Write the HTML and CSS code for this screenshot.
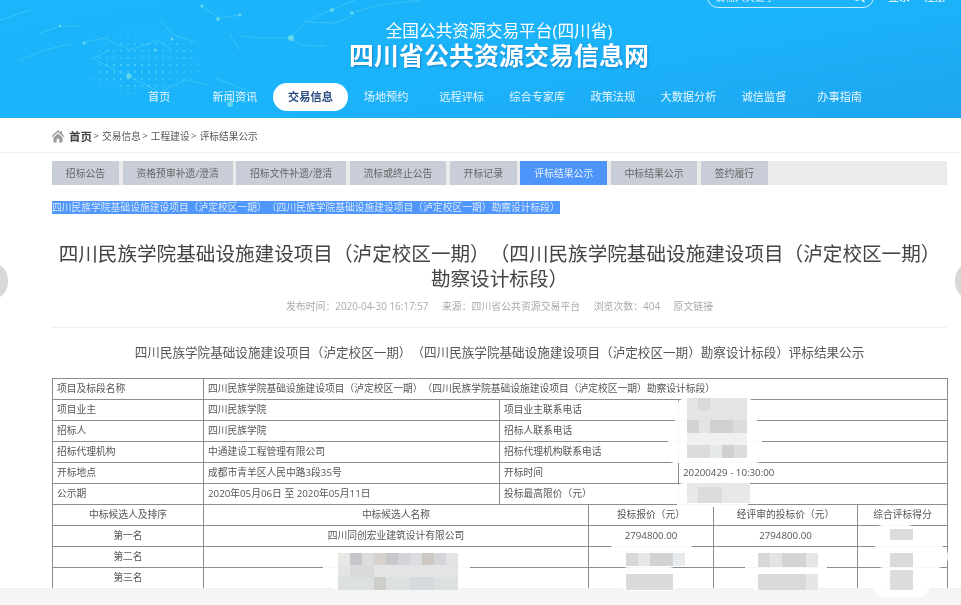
FILE: index.html
```html
<!DOCTYPE html>
<html lang="zh-CN">
<head>
  <meta charset="UTF-8">
  <title>评标结果公示 - 四川省公共资源交易信息网</title>
  <link rel="stylesheet" href="styles.css">
</head>
<body>
  <div class="page">
    <header class="header">
      <svg class="header-bg" width="961" height="118" viewBox="0 0 961 118">
        <defs>
          <pattern id="dots" width="7" height="7" patternUnits="userSpaceOnUse">
            <circle cx="2" cy="2" r="0.8" fill="#7fe6e6" opacity="0.45"/>
          </pattern>
        </defs>
        <ellipse cx="145" cy="50" rx="55" ry="22" fill="url(#dots)" opacity="0.6"/>
        <ellipse cx="150" cy="65" rx="55" ry="26" fill="url(#dots)"/>
        <ellipse cx="130" cy="78" rx="38" ry="16" fill="url(#dots)"/>
        <g stroke="#7fe6e6" stroke-width="0.6" opacity="0.5" fill="none">
          <path d="M40 33 L60 26 L80 26 M85 42 L105 38 L130 50 L158 40 L172 50 M200 5 L220 18 L240 15 M240 36 L262 38 L290 38 L305 22 L330 10 L355 0"/>
          <path d="M305 22 L335 23 L352 16 M290 38 L300 45 L325 46 M90 60 L110 50 M95 60 L128 76 L160 92 L185 80 L210 85 M215 78 L245 90 M160 20 L172 34 L195 42 M230 35 L240 50"/>
          <path d="M0 20 L30 10 M20 60 L45 50 L70 44 M355 12 L380 5 M380 5 L420 0"/>
        </g>
        <g fill="#7fe6e6" opacity="0.7">
          <circle cx="291" cy="38" r="3"/><circle cx="218" cy="19" r="2"/><circle cx="240" cy="15" r="1.5"/>
          <circle cx="332" cy="10" r="2"/><circle cx="352" cy="13" r="1.8"/><circle cx="129" cy="76" r="2.5"/>
          <circle cx="84" cy="43" r="1.5"/><circle cx="172" cy="39" r="1.5"/><circle cx="230" cy="104" r="3"/>
          <circle cx="155" cy="50" r="1.3"/><circle cx="60" cy="26" r="1.2"/><circle cx="202" cy="6" r="1.5"/>
        </g>
      </svg>
      <div class="topbar">
        <div class="search">
          <span class="search-text">请输入关键字</span>
          <svg class="search-icon" width="16" height="16" viewBox="0 0 16 16" fill="none" stroke="#fff" stroke-width="1.3">
            <circle cx="7" cy="7" r="5"/><path d="M11 11l3.5 3"/>
          </svg>
        </div>
        <a class="top-link">登录</a>
        <a class="top-link">注册</a>
      </div>
      <div class="brand">
        <div class="brand-sub">全国公共资源交易平台(四川省)</div>
        <div class="brand-main">四川省公共资源交易信息网</div>
      </div>
      <nav class="nav">
        <a class="nav-item">首页</a>
        <a class="nav-item">新闻资讯</a>
        <a class="nav-item active">交易信息</a>
        <a class="nav-item">场地预约</a>
        <a class="nav-item">远程评标</a>
        <a class="nav-item">综合专家库</a>
        <a class="nav-item">政策法规</a>
        <a class="nav-item">大数据分析</a>
        <a class="nav-item">诚信监督</a>
        <a class="nav-item">办事指南</a>
      </nav>
    </header>

    <div class="crumbs">
      <svg class="home-icon" width="14" height="14" viewBox="0 0 14 14" fill="#9a9a9a">
        <path d="M7 1L0.5 7.2 1.5 7.9 7 3 12.5 7.9 13.5 7.2 11 4.8V2H9.5V3.4z"/>
        <path d="M2.5 8.4L7 4.4l4.5 4V13.5H8.3V9.8H5.7v3.7H2.500z"/>
      </svg>
      <a class="crumb-home">首页</a><span class="crumb-sep">&gt;</span>
      <a>交易信息</a><span class="crumb-sep">&gt;</span>
      <a>工程建设</a><span class="crumb-sep">&gt;</span>
      <a>评标结果公示</a>
    </div>

    <main class="main">
      <div class="tabs">
        <a class="tab">招标公告</a>
        <a class="tab">资格预审补遗/澄清</a>
        <a class="tab">招标文件补遗/澄清</a>
        <a class="tab">流标或终止公告</a>
        <a class="tab">开标记录</a>
        <a class="tab current">评标结果公示</a>
        <a class="tab">中标结果公示</a>
        <a class="tab">签约履行</a>
      </div>

      <div class="selected-line"><span>四川民族学院基础设施建设项目（泸定校区一期）（四川民族学院基础设施建设项目（泸定校区一期）勘察设计标段）</span></div>

      <h1 class="title">四川民族学院基础设施建设项目（泸定校区一期）（四川民族学院基础设施建设项目（泸定校区一期）勘察设计标段）</h1>

      <div class="meta">
        <span>发布时间：2020-04-30 16:17:57</span>
        <span>来源：四川省公共资源交易平台</span>
        <span>浏览次数：404</span>
        <span>原文链接</span>
      </div>

      <h2 class="subtitle">四川民族学院基础设施建设项目（泸定校区一期）（四川民族学院基础设施建设项目（泸定校区一期）勘察设计标段）评标结果公示</h2>

      <table class="result">
        <colgroup>
          <col class="c1"><col class="c2"><col class="c3"><col class="c4"><col class="c5"><col class="c6"><col class="c7">
        </colgroup>
        <tr>
          <td>项目及标段名称</td>
          <td colspan="6">四川民族学院基础设施建设项目（泸定校区一期）（四川民族学院基础设施建设项目（泸定校区一期）勘察设计标段）</td>
        </tr>
        <tr>
          <td>项目业主</td>
          <td>四川民族学院</td>
          <td colspan="2">项目业主联系电话</td>
          <td colspan="3"></td>
        </tr>
        <tr>
          <td>招标人</td>
          <td>四川民族学院</td>
          <td colspan="2">招标人联系电话</td>
          <td colspan="3"></td>
        </tr>
        <tr>
          <td>招标代理机构</td>
          <td>中通建设工程管理有限公司</td>
          <td colspan="2">招标代理机构联系电话</td>
          <td colspan="3"></td>
        </tr>
        <tr>
          <td>开标地点</td>
          <td>成都市青羊区人民中路3段35号</td>
          <td colspan="2">开标时间</td>
          <td colspan="3">20200429 - 10:30:00</td>
        </tr>
        <tr>
          <td>公示期</td>
          <td>2020年05月06日 至 2020年05月11日</td>
          <td colspan="2">投标最高限价（元）</td>
          <td colspan="3"></td>
        </tr>
        <tr class="center">
          <td>中标候选人及排序</td>
          <td colspan="2">中标候选人名称</td>
          <td colspan="2">投标报价（元）</td>
          <td>经评审的投标价（元）</td>
          <td>综合评标得分</td>
        </tr>
        <tr class="center">
          <td>第一名</td>
          <td colspan="2">四川同创宏业建筑设计有限公司</td>
          <td colspan="2">2794800.00</td>
          <td>2794800.00</td>
          <td></td>
        </tr>
        <tr class="center">
          <td>第二名</td>
          <td colspan="2"></td>
          <td colspan="2"></td>
          <td></td>
          <td></td>
        </tr>
        <tr class="center">
          <td>第三名</td>
          <td colspan="2"></td>
          <td colspan="2"></td>
          <td></td>
          <td></td>
        </tr>
      </table>
    </main>

    <footer class="foot"></footer>

    <!-- mosaics over the hidden cells, they run over the footer edge too -->
    <svg class="mosaics" width="909" height="228" viewBox="0 0 909 228">
      <g fill="#fff" opacity="0.94">
        <rect x="623" y="21" width="82" height="36" rx="12"/>
        <rect x="616" y="50" width="94" height="36" rx="6"/>
        <rect x="621" y="106" width="79" height="24" rx="11"/>
        <rect x="271" y="170" width="147" height="43" rx="16"/>
        <rect x="556" y="166" width="87" height="24" rx="12"/>
        <rect x="566" y="190" width="62" height="24" rx="11"/>
        <rect x="693" y="171" width="82" height="42" rx="14"/>
        <rect x="820" y="148" width="46" height="25" rx="11"/>
        <rect x="823" y="168" width="73" height="23" rx="11"/>
        <rect x="820" y="190" width="58" height="30" rx="12"/>
      </g>
      <rect x="635" y="21" width="60" height="22" fill="#e3e4e5"/>
      <rect x="646" y="21" width="12" height="12" fill="#d8d9da"/>
      <rect x="635" y="43" width="12" height="13" fill="#d3d3d3"/>
      <rect x="647" y="43" width="11" height="13" fill="#e4e4e4"/>
      <rect x="658" y="43" width="23" height="13" fill="#d0d0d0"/>
      <rect x="681" y="43" width="14" height="13" fill="#dcdcdc"/>
      <rect x="635" y="56" width="60" height="12" fill="#f0f0f0"/>
      <rect x="635" y="68" width="23" height="13" fill="#dcdcdc"/>
      <rect x="658" y="68" width="12" height="13" fill="#e6e9ea"/>
      <rect x="670" y="68" width="12" height="13" fill="#d0d0d0"/>
      <rect x="682" y="68" width="13" height="13" fill="#dcdcdc"/>
      <rect x="635" y="106" width="63" height="20" fill="#e8e8e8"/>
      <rect x="646" y="110" width="24" height="16" fill="#dcdcdc"/>

      <rect x="286" y="176" width="12" height="12" fill="#e8e7e4"/>
      <rect x="298" y="176" width="12" height="12" fill="#c4c6ca"/>
      <rect x="310" y="176" width="12" height="12" fill="#dcdddd"/>
      <rect x="322" y="176" width="12" height="12" fill="#d8d2cd"/>
      <rect x="334" y="176" width="12" height="12" fill="#c6c8cc"/>
      <rect x="346" y="176" width="12" height="12" fill="#d2d4d8"/>
      <rect x="358" y="176" width="12" height="12" fill="#dcdde3"/>
      <rect x="370" y="176" width="12" height="12" fill="#cdc8c2"/>
      <rect x="382" y="176" width="12" height="12" fill="#d3d5d8"/>
      <rect x="394" y="176" width="12" height="12" fill="#e2e3e5"/>
      <rect x="286" y="188" width="120" height="12" fill="#e2e4e6"/>
      <rect x="298" y="188" width="24" height="12" fill="#d8dadc"/>
      <rect x="286" y="200" width="120" height="13" fill="#dde0e1"/>
      <rect x="322" y="200" width="12" height="13" fill="#cfcdc8"/>
      <rect x="358" y="200" width="24" height="13" fill="#d6dadd"/>

      <rect x="574" y="176" width="12" height="13" fill="#d8d8d8"/>
      <rect x="586" y="176" width="12" height="13" fill="#e6e6e6"/>
      <rect x="598" y="176" width="23" height="13" fill="#d2d2d2"/>
      <rect x="621" y="176" width="12" height="13" fill="#e8ebee"/>
      <rect x="574" y="197" width="47" height="16" fill="#dadada"/>

      <rect x="706" y="176" width="12" height="14" fill="#d8d8d8"/>
      <rect x="718" y="176" width="12" height="14" fill="#e4e4e4"/>
      <rect x="730" y="176" width="24" height="14" fill="#d4d4d4"/>
      <rect x="754" y="176" width="12" height="14" fill="#e4e6e8"/>
      <rect x="706" y="197" width="48" height="16" fill="#dadada"/>
      <rect x="754" y="197" width="12" height="16" fill="#e4e6e8"/>

      <rect x="838" y="152" width="23" height="11" fill="#dcdcdc"/>
      <rect x="838" y="176" width="23" height="14" fill="#dadada"/>
      <rect x="838" y="193" width="23" height="20" fill="#dcdcdc"/>
    </svg>

    <span class="side-arrow left"></span>
    <span class="side-arrow right"></span>
  </div>
</body>
</html>
```

FILE: styles.css
```css
* {
  box-sizing: border-box;
}
html, body {
  margin: 0;
  height: 100%;
  overflow: hidden;
}
body {
  font-family: "Open Sans", "Noto Sans CJK SC", sans-serif;
  text-spacing-trim: space-all;
  color: #555;
  background: #fff;
}
.page {
  position: relative;
  display: flex;
  flex-direction: column;
  height: 605px;
  overflow: hidden;
  filter: blur(0.4px);
}

/* header */
.header {
  position: relative;
  flex: none;
  height: 118px;
  padding-top: 20px;
  background: linear-gradient(170deg, #1bb5fb 0%, #1bb3fa 55%, #1ea5ef 100%);
  color: #fff;
  text-align: center;
}
.header-bg {
  position: absolute;
  left: 0;
  top: 0;
}
.topbar {
  position: absolute;
  left: 707px;
  top: -16px;
  display: flex;
  align-items: center;
  font-size: 11px;
}
.search {
  display: flex;
  align-items: center;
  justify-content: space-between;
  width: 167px;
  height: 24px;
  padding: 0 7px;
  margin-right: 14px;
  border: 1px solid #cdeefd;
  border-radius: 11px;
}
.search-text {
  font-size: 10px;
  opacity: 0.8;
}
.top-link {
  margin-right: 14px;
}
.brand {
  position: relative;
  margin-left: 37px;
}
.brand-sub {
  font-size: 16.7px;
  line-height: 21px;
}
.brand-main {
  font-size: 25px;
  font-weight: 700;
  line-height: 28px;
  text-shadow: 1px 1px 2px rgba(20, 90, 160, 0.5);
}
.nav {
  position: relative;
  display: grid;
  grid-template-columns: repeat(10, 75.6px);
  margin: 14px 0 0 121.5px;
  font-size: 11.2px;
  line-height: 28px;
}
.nav-item {
  color: #e6f6ff;
}
.nav-item.active {
  justify-self: center;
  width: 75px;
  border-radius: 14px;
  background: #fff;
  color: #2d4c82;
  font-weight: 700;
}

/* breadcrumb */
.crumbs {
  flex: none;
  display: flex;
  align-items: center;
  height: 35px;
  padding: 1px 0 0 51px;
  border-bottom: 1px solid #efefef;
  font-size: 9.7px;
  color: #555;
}
.home-icon {
  margin-right: 4px;
}
.crumb-home {
  font-size: 11.5px;
  font-weight: 700;
  color: #444;
}
.crumb-sep {
  margin: 0 3px 0 1.5px;
}

/* content */
.main {
  flex: 1;
  min-height: 0;
  padding: 8px 14px 0 52px;
  overflow: hidden;
}
.tabs {
  display: flex;
  gap: 3.6px;
  height: 24px;
  background: #ebebeb;
}
.tab {
  padding: 0 13.8px;
  background: #c9cdd7;
  font-size: 9.85px;
  line-height: 24px;
  color: #666;
}
.tab.current {
  background: #4d94fb;
  color: #e8f1ff;
}
.selected-line {
  margin-top: 16px;
  font-size: 9.77px;
  line-height: 14px;
}
.selected-line span {
  background: #4f97fb;
  color: #d8e8ff;
}
.title {
  margin: 26px 0 0;
  font-size: 19.6px;
  font-weight: 400;
  line-height: 25px;
  text-align: center;
  color: #444;
}
.meta {
  display: flex;
  justify-content: center;
  gap: 13.5px;
  height: 29px;
  margin-top: 7.5px;
  border-bottom: 1px solid #efefef;
  font-size: 9.9px;
  line-height: 14px;
  color: #aaa;
}
.subtitle {
  margin: 16px 0 0;
  font-size: 12.58px;
  font-weight: 400;
  line-height: 18px;
  text-align: center;
  color: #555;
}

/* table */
.result {
  width: 895px;
  margin-top: 16px;
  border-collapse: collapse;
  table-layout: fixed;
  font-size: 9.75px;
  color: #555;
}
.result td {
  height: 21px;
  padding: 0 4px;
  border: 1px solid #8c8c8c;
  line-height: 14px;
  overflow: hidden;
  white-space: nowrap;
}
.result .center td {
  text-align: center;
}
.c1 { width: 151px; }
.c2 { width: 296px; }
.c3 { width: 89px; }
.c4 { width: 90px; }
.c5 { width: 35px; }
.c6 { width: 144px; }
.c7 { width: 90px; }

.foot {
  position: absolute;
  left: 0;
  right: 0;
  bottom: 0;
  height: 17px;
  background: #f5f5f5;
  border-top: 1px solid #eef0f0;
}
.mosaics {
  position: absolute;
  left: 52px;
  top: 377px;
}
.side-arrow {
  position: absolute;
  top: 262px;
  width: 18px;
  height: 38px;
  background: #d8d8d8;
}
.side-arrow.left {
  left: -10px;
  border-radius: 0 19px 19px 0;
}
.side-arrow.right {
  right: -12px;
  border-radius: 19px 0 0 19px;
}
```
